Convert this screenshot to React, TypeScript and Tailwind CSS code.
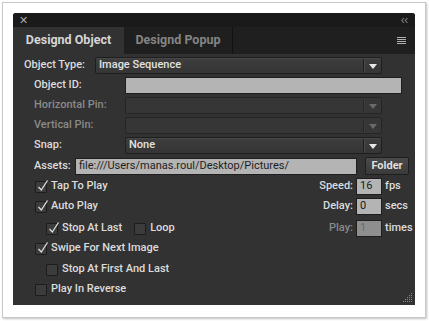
import React from 'react';

const font = { fontFamily: 'Roboto, "Liberation Sans", sans-serif' };

function Arrow({ dim }: { dim?: boolean }) {
  return (
    <svg width="8" height="5" viewBox="0 0 8 5" className="shrink-0">
      <path d="M0 0H8L4 5Z" fill={dim ? '#6a6a6a' : '#e8e8e8'} />
    </svg>
  );
}

function Dropdown({ value, dim, width }: { value?: string; dim?: boolean; width: string }) {
  return (
    <div
      className={`flex h-[17px] ${width} items-center rounded-[2px] border ${
        dim ? 'border-[#262626] bg-[#363636]' : 'border-[#1e1e1e] bg-gradient-to-b from-[#3e3e3e] to-[#353535] shadow-[inset_0_1px_0_#474747]'
      }`}
    >
      <span className="flex-1 pl-[3px] text-[11px] font-medium text-[#e2e2e2]">{value}</span>
      <div className={`h-[13px] border-l border-r ${dim ? 'border-l-[#262626] border-r-[#3e3e3e]' : 'border-l-[#1e1e1e] border-r-[#4a4a4a]'}`} />
      <div className="flex w-[16px] justify-center pt-[1px]">
        <Arrow dim={dim} />
      </div>
    </div>
  );
}

function Check({ on }: { on?: boolean }) {
  return (
    <div className="relative h-[12px] w-[12px] shrink-0 rounded-[1px] border border-[#1c1c1c] bg-[#3c3c3c]">
      {on && (
        <svg width="14" height="14" viewBox="0 0 14 14" className="absolute left-[0px] top-[-3px]">
          <path d="M2.5 8L5.3 11L11.5 1.5" stroke="#dedede" strokeWidth="1.3" fill="none" />
        </svg>
      )}
    </div>
  );
}

function Box({ label, on, className }: { label: string; on?: boolean; className?: string }) {
  return (
    <div className={`flex items-center gap-[4px] ${className ?? ''}`}>
      <Check on={on} />
      <span className="text-[11px] font-medium text-[#dcdcdc]">{label}</span>
    </div>
  );
}

function Num({ label, value, unit, dim }: { label: string; value: string; unit: string; dim?: boolean }) {
  return (
    <div className="flex items-center">
      <span className={`text-[11px] font-medium ${dim ? 'text-[#8a8a8a]' : 'text-[#dcdcdc]'}`}>{label}</span>
      <div
        className={`ml-[3px] flex h-[17px] w-[26px] items-center border border-[#1e1e1e] pl-[3px] text-[11px] ${
          dim ? 'bg-[#8e8e8e] text-[#6c6c6c]' : 'bg-[#b4b4b4] text-[#1a1a1a]'
        }`}
      >
        {value}
      </div>
      <span className="ml-[3px] w-[30px] text-[11px] font-medium text-[#dcdcdc]">{unit}</span>
    </div>
  );
}

function Grip() {
  const dots: [number, number][] = [];
  for (let r = 0; r < 5; r++) for (let c = 4 - r; c < 5; c++) dots.push([c * 2, r * 2]);
  return (
    <svg width="10" height="10" viewBox="0 0 10 10" className="absolute bottom-[2px] right-[2px]">
      {dots.map(([x, y], i) => (
        <rect key={i} x={x} y={y} width="1" height="1" fill="#8a8a8a" />
      ))}
    </svg>
  );
}

export default function App() {
  return (
    <div className="h-[321px] w-[429px] bg-white pl-[2px] pt-[2px]" style={font}>
      <div className="h-[316px] w-[424px] border border-[#c9c9c9] bg-white px-[10px] pt-[10px] shadow-[1px_1px_2px_rgba(0,0,0,0.25)]">
        <div className="relative flex h-[292px] w-[402px] flex-col overflow-hidden rounded-t-[3px] bg-[#323232]">
          {/* title bar */}
          <div className="flex h-[14px] items-center justify-between bg-[#1a1a1a] pl-[6px] pr-[7px]">
            <span className="text-[11px] leading-none text-[#a8a8a8]">✕</span>
            <svg width="7" height="5" viewBox="0 0 7 5">
              <path d="M3 0L0.8 2.5L3 5M6.5 0L4.3 2.5L6.5 5" stroke="#7c7c7c" strokeWidth="1.1" fill="none" />
            </svg>
          </div>
          {/* tabs */}
          <div className="flex h-[27px] bg-[#1f1f1f]">
            <div className="flex w-[111px] items-center justify-center bg-[#323232] text-[12.5px] font-bold text-[#d6d6d6]">
              Designd Object
            </div>
            <div className="flex w-[109px] items-center justify-center border-r border-[#121212] text-[12.5px] font-bold text-[#858585]">
              Designd Popup
            </div>
            <div className="flex flex-1 items-center justify-end pr-[9px]">
              <div className="flex w-[9px] flex-col gap-[1px]">
                <div className="h-[1px] bg-[#b0b0b0]" />
                <div className="h-[1px] bg-[#b0b0b0]" />
                <div className="h-[1px] bg-[#b0b0b0]" />
                <div className="h-[1px] bg-[#b0b0b0]" />
              </div>
            </div>
          </div>
          {/* form */}
          <div className="flex flex-col gap-[3px] pt-[3px] text-[11px] font-medium text-[#dcdcdc]">
            <div className="flex items-center">
              <span className="w-[82px] pl-[11px]">Object Type:</span>
              <Dropdown value="Image Sequence" width="w-[287px]" />
            </div>
            <div className="flex items-center">
              <span className="w-[112px] pl-[21px]">Object ID:</span>
              <div className="h-[17px] w-[277px] border border-[#1e1e1e] bg-[#b4b4b4]" />
            </div>
            <div className="flex items-center">
              <span className="w-[112px] pl-[21px] text-[#8a8a8a]">Horizontal Pin:</span>
              <Dropdown dim width="w-[257px]" />
            </div>
            <div className="flex items-center">
              <span className="w-[112px] pl-[21px] text-[#8a8a8a]">Vertical Pin:</span>
              <Dropdown dim width="w-[257px]" />
            </div>
            <div className="flex items-center">
              <span className="w-[112px] pl-[21px]">Snap:</span>
              <Dropdown value="None" width="w-[257px]" />
            </div>
            <div className="flex items-center">
              <span className="w-[62px] pl-[21px]">Assets:</span>
              <div className="flex h-[17px] w-[282px] items-center border border-[#1e1e1e] bg-[#b4b4b4] pl-[3px] font-normal text-[#1e1e1e]">
                file:///Users/manas.roul/Desktop/Pictures/
              </div>
              <div className="ml-[8px] flex h-[18px] w-[44px] items-center justify-center rounded-[2px] border border-[#1e1e1e] bg-gradient-to-b from-[#4a4a4a] to-[#3a3a3a] font-bold text-[#dedede]">
                Folder
              </div>
            </div>
          </div>
          {/* options */}
          <div className="mt-[3px] flex flex-col pl-[22px]">
            <div className="flex h-[17px] items-center justify-between">
              <Box label="Tap To Play" on />
              <Num label="Speed:" value="16" unit="fps" />
            </div>
            <div className="mt-[3px] flex h-[17px] items-center justify-between">
              <Box label="Auto Play" on />
              <Num label="Delay:" value="0" unit="secs" />
            </div>
            <div className="mt-[5px] flex h-[17px] items-center justify-between">
              <div className="flex items-center pl-[11px]">
                <Box label="Stop At Last" on />
                <Box label="Loop" className="ml-[12px]" />
              </div>
              <Num label="Play:" value="1" unit="times" dim />
            </div>
            <Box label="Swipe For Next Image" on className="mt-[3px] h-[17px]" />
            <Box label="Stop At First And Last" className="mt-[4px] h-[17px] pl-[11px]" />
            <Box label="Play In Reverse" className="mt-[3px] h-[17px]" />
          </div>
          <Grip />
        </div>
      </div>
    </div>
  );
}
